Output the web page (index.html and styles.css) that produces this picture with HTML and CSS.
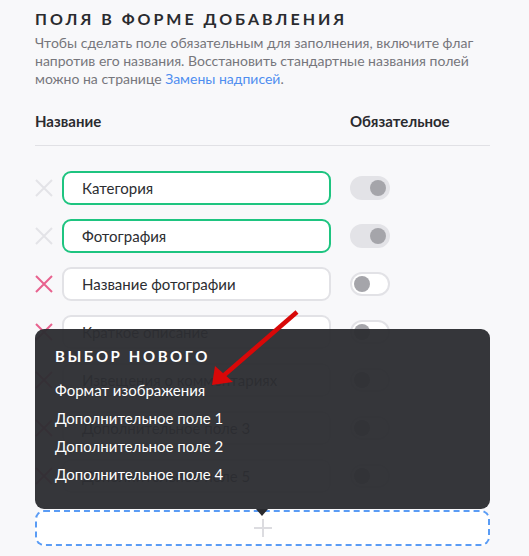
FILE: index.html
```html
<!DOCTYPE html>
<html lang="ru">
<head>
<meta charset="utf-8">
<title>Поля в форме добавления</title>
<link rel="stylesheet" href="styles.css">
</head>
<body>
<main class="page">
  <h2 class="title">Поля в форме добавления</h2>
  <p class="hint">Чтобы сделать поле обязательным для заполнения, включите флаг напротив его названия. Восстановить стандартные названия полей можно на странице <a href="#" class="link">Замены надписей</a>.</p>

  <div class="head">
    <span class="head-name">Название</span>
    <span class="head-req">Обязательное</span>
  </div>

  <ul class="fields">
    <li class="field">
      <span class="remove disabled"><svg viewBox="0 0 18 18" width="18" height="18"><path d="M1 1L17 17M17 1L1 17"/></svg></span>
      <div class="input required">Категория</div>
      <span class="toggle on"><span class="knob"></span></span>
    </li>
    <li class="field">
      <span class="remove disabled"><svg viewBox="0 0 18 18" width="18" height="18"><path d="M1 1L17 17M17 1L1 17"/></svg></span>
      <div class="input required">Фотография</div>
      <span class="toggle on"><span class="knob"></span></span>
    </li>
    <li class="field">
      <span class="remove"><svg viewBox="0 0 18 18" width="18" height="18"><path d="M1 1L17 17M17 1L1 17"/></svg></span>
      <div class="input">Название фотографии</div>
      <span class="toggle"><span class="knob"></span></span>
    </li>
    <li class="field">
      <span class="remove"><svg viewBox="0 0 18 18" width="18" height="18"><path d="M1 1L17 17M17 1L1 17"/></svg></span>
      <div class="input">Краткое описание</div>
      <span class="toggle"><span class="knob"></span></span>
    </li>
    <li class="field">
      <span class="remove"><svg viewBox="0 0 18 18" width="18" height="18"><path d="M1 1L17 17M17 1L1 17"/></svg></span>
      <div class="input">Извещения о комментариях</div>
      <span class="toggle"><span class="knob"></span></span>
    </li>
    <li class="field">
      <span class="remove"><svg viewBox="0 0 18 18" width="18" height="18"><path d="M1 1L17 17M17 1L1 17"/></svg></span>
      <div class="input">Дополнительное поле 3</div>
      <span class="toggle"><span class="knob"></span></span>
    </li>
    <li class="field">
      <span class="remove"><svg viewBox="0 0 18 18" width="18" height="18"><path d="M1 1L17 17M17 1L1 17"/></svg></span>
      <div class="input">Дополнительное поле 5</div>
      <span class="toggle"><span class="knob"></span></span>
    </li>
  </ul>

  <div class="add-wrap">
    <div class="popup">
      <div class="popup-title">Выбор нового</div>
      <ul class="popup-list">
        <li class="popup-item">Формат изображения</li>
        <li class="popup-item">Дополнительное поле 1</li>
        <li class="popup-item">Дополнительное поле 2</li>
        <li class="popup-item">Дополнительное поле 4</li>
      </ul>
    </div>
    <button class="add" type="button"><svg viewBox="0 0 18 18" width="18" height="18"><path d="M9 0V18M0 9H18"/></svg></button>
  </div>

  <svg class="annotation" viewBox="0 0 105 85" width="105" height="85">
    <line x1="97" y1="7" x2="22" y2="72"/>
    <polygon points="12,80 15,61 33,77"/>
  </svg>
</main>
</body>
</html>
```
FILE: styles.css
```css
* { box-sizing: border-box; }

html, body {
  margin: 0;
  padding: 0;
  background: #f8f8fa;
}

body {
  font-family: Lato, "Noto Sans", "DejaVu Sans", sans-serif;
  color: #2c2d31;
}

.page {
  position: relative;
  width: 529px;
  height: 556px;
  padding: 9px 39px 0 35px;
  overflow: hidden;
}

.title {
  margin: 0;
  font-size: 16px;
  line-height: 20px;
  font-weight: 700;
  letter-spacing: 3px;
  text-transform: uppercase;
  color: #2a2b2f;
}

.hint {
  margin: 5px 0 0;
  font-size: 14px;
  line-height: 18px;
  color: #76767c;
}

.link {
  color: #4f8ef0;
  text-decoration: none;
}

.head {
  display: flex;
  margin-top: 23px;
  padding-bottom: 14px;
  border-bottom: 1px solid #e1e1e5;
  font-size: 15px;
  line-height: 20px;
  font-weight: 700;
  color: #2a2b2f;
}

.head-name { width: 315px; }

.fields {
  list-style: none;
  margin: 25px 0 0;
  padding: 0;
  display: flex;
  flex-direction: column;
  gap: 14px;
}

.field {
  display: flex;
  align-items: center;
  height: 34px;
}

.remove {
  width: 19px;
  height: 18px;
  margin-right: 8px;
  display: flex;
  align-items: center;
}

.remove svg path {
  stroke: #e8628e;
  stroke-width: 2;
  fill: none;
}

.remove.disabled svg path { stroke: #e3e3e7; }

.input {
  width: 269px;
  height: 34px;
  padding-left: 18px;
  display: flex;
  align-items: center;
  background: #fff;
  border: 2px solid #e2e2e6;
  border-radius: 9px;
  font-size: 15px;
  color: #2c2d31;
}

.input.required { border-color: #1ec480; }

.toggle {
  margin-left: 19px;
  width: 40px;
  height: 24px;
  border-radius: 12px;
  border: 2px solid #e2e2e6;
  background: #fff;
  display: flex;
  align-items: center;
  padding: 0 2px;
}

.toggle.on {
  background: #e3e3e7;
  border-color: #e3e3e7;
  justify-content: flex-end;
}

.knob {
  width: 16px;
  height: 16px;
  border-radius: 50%;
  background: #a5a5aa;
}

.add-wrap {
  position: relative;
  margin-top: 17px;
}

.add {
  display: flex;
  align-items: center;
  justify-content: center;
  width: 100%;
  height: 36px;
  padding: 0;
  background: #fff;
  border: 2px dashed #5a9cf5;
  border-radius: 9px;
  cursor: pointer;
}

.add svg path {
  stroke: #dcdce0;
  stroke-width: 2;
  fill: none;
}

.popup {
  position: absolute;
  left: 0;
  right: 0;
  bottom: calc(100% + 1px);
  height: 180px;
  padding: 17px 20px 0;
  background: rgba(45, 46, 50, 0.96);
  border-radius: 9px;
  color: #fff;
  z-index: 2;
}

.popup::after {
  content: "";
  position: absolute;
  left: 221px;
  top: 100%;
  border-left: 6px solid transparent;
  border-right: 6px solid transparent;
  border-top: 7px solid #2a2b2f;
}

.popup-title {
  font-size: 15px;
  line-height: 20px;
  font-weight: 700;
  letter-spacing: 2.6px;
  text-transform: uppercase;
}

.popup-list {
  list-style: none;
  margin: 10px 0 0;
  padding: 0;
}

.popup-item {
  font-size: 15px;
  line-height: 28px;
  color: #fff;
}

.annotation {
  position: absolute;
  left: 200px;
  top: 305px;
  z-index: 3;
}

.annotation line {
  stroke: #d80808;
  stroke-width: 4.5;
}

.annotation polygon { fill: #d80808; }
```
